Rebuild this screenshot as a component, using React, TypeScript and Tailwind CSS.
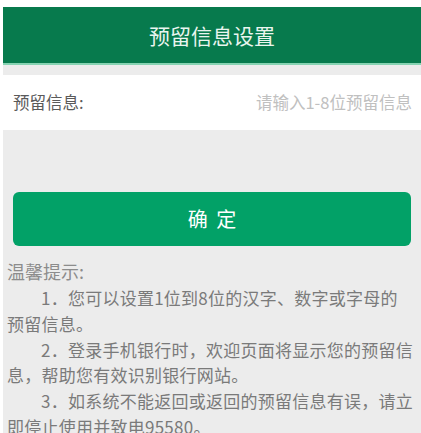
const tips = [
  "1．您可以设置1位到8位的汉字、数字或字母的预留信息。",
  "2．登录手机银行时，欢迎页面将显示您的预留信息，帮助您有效识别银行网站。",
  "3．如系统不能返回或返回的预留信息有误，请立即停止使用并致电95580。",
];

export default function App() {
  return (
    <div
      className="min-h-screen bg-white pt-[7px] pl-[3px]"
      style={{ fontFamily: '"Noto Sans CJK SC", "Noto Sans", sans-serif' }}
    >
      <div className="bg-[#ececec] min-h-[426px] overflow-hidden">
        <header className="h-[58px] bg-[#077a4d] border-b-2 border-[#86d3b2] flex items-center justify-center">
          <h1 className="text-[21px] text-[#eaf5ef] leading-none">预留信息设置</h1>
        </header>

        <div className="mt-[10px] h-[55px] bg-white flex items-center justify-between pl-[10px] pr-[9px]">
          <span className="text-[16.5px] text-[#5a5a5a]">预留信息:</span>
          <span className="text-[16.5px] text-[#c0c0c0]">请输入1-8位预留信息</span>
        </div>

        <div className="mt-[62px] px-[10px]">
          <button className="w-full h-[54px] rounded-[6px] bg-[#02a167] text-white text-[20px] tracking-[2px] pl-[2px]">
            确 定
          </button>
        </div>

        <div className="pl-[4px] w-[410px] mt-[11px]">
          <p className="text-[18px] leading-[28px] text-[#8c8c8c]">温馨提示:</p>
          {tips.map((t) => (
            <p key={t} className="text-[17px] leading-[25.8px] tracking-[0.25px] text-[#7a7a7a] indent-[2em]">
              {t}
            </p>
          ))}
        </div>
      </div>
    </div>
  );
}
